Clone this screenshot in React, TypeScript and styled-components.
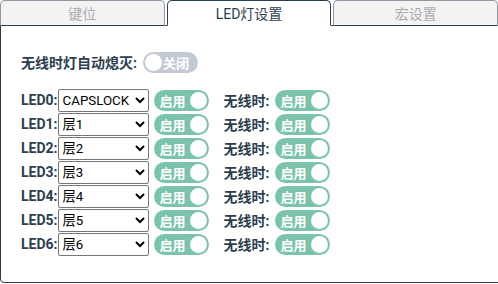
import React from "react";
import styled, { createGlobalStyle } from "styled-components";

const GlobalStyle = createGlobalStyle`
  body {
    margin: 0;
    background: #fff;
    font-family: Roboto, "Noto Sans CJK SC", sans-serif;
    color: #2c3e50;
  }
`;

const Wrapper = styled.div`
  width: 498px;
  height: 284px;
  overflow: hidden;
`;

const TabBar = styled.div`
  display: flex;
  gap: 2px;
  height: 26px;
  position: relative;
  z-index: 1;
  margin-bottom: -1px;
`;

const Tab = styled.div<{ $active?: boolean }>`
  flex: 1;
  display: flex;
  align-items: center;
  justify-content: center;
  box-sizing: border-box;
  border: 1px solid ${(p) => (p.$active ? "#2c3e50" : "#8e99a4")};
  border-bottom: ${(p) => (p.$active ? "1px solid #fff" : "1px solid #2c3e50")};
  border-radius: 5px 5px 0 0;
  background: ${(p) => (p.$active ? "#fff" : "#f3f3f3")};
  color: ${(p) => (p.$active ? "#2c3e50" : "#a9adb2")};
  font-size: 14px;
`;

const Panel = styled.div`
  box-sizing: border-box;
  height: 258px;
  width: 500px;
  border: 1px solid #2c3e50;
  border-radius: 0 0 0 4px;
  padding: 25px 0 0 20px;
`;

const Line = styled.div`
  display: flex;
  align-items: center;
  height: 21px;
  font-size: 14px;
  font-weight: 700;
`;

const Rows = styled.div`
  margin-top: 16px;
  display: flex;
  flex-direction: column;
`;

const Row = styled.div`
  display: flex;
  align-items: center;
  height: 24px;
  font-size: 14px;
  font-weight: 700;
`;

const Label = styled.span<{ $gap?: number; $indent?: number }>`
  margin-left: ${(p) => p.$indent ?? 0}px;
  margin-right: ${(p) => p.$gap ?? 0}px;
  white-space: nowrap;
`;

const Select = styled.select`
  box-sizing: border-box;
  width: 91px;
  height: 23px;
  font-family: Roboto, "Noto Sans CJK SC", sans-serif;
  font-size: 13.3px;
  color: #000;
  background: #fff;
  border: 1px solid #767676;
  border-radius: 2px;
  margin-right: 5px;
`;

const SwitchRoot = styled.span<{ $on: boolean }>`
  position: relative;
  display: inline-flex;
  align-items: center;
  justify-content: ${(p) => (p.$on ? "flex-start" : "flex-end")};
  box-sizing: border-box;
  width: 55px;
  height: 21px;
  border-radius: 11px;
  padding-left: ${(p) => (p.$on ? "6px" : "0")};
  padding-right: ${(p) => (p.$on ? "0" : "9px")};
  background: ${(p) => (p.$on ? "#7bc3ab" : "#c3cad6")};
  color: #fff;
  font-size: 13px;
  font-weight: 700;
  margin-top: 1px;
`;

const Knob = styled.span<{ $on: boolean }>`
  position: absolute;
  top: 2px;
  ${(p) => (p.$on ? "right: 2px;" : "left: 2px;")}
  width: 17px;
  height: 17px;
  border-radius: 50%;
  background: #fff;
`;

const Switch = ({ on }: { on: boolean }) => (
  <SwitchRoot $on={on}>
    {on ? "启用" : "关闭"}
    <Knob $on={on} />
  </SwitchRoot>
);

const options = ["CAPSLOCK", "层1", "层2", "层3", "层4", "层5", "层6"];

const App = () => {
  const [active] = React.useState(1);
  return (
    <Wrapper>
      <GlobalStyle />
      <TabBar>
        {["键位", "LED灯设置", "宏设置"].map((t, i) => (
          <Tab key={t} $active={i === active}>
            {t}
          </Tab>
        ))}
      </TabBar>
      <Panel>
        <Line>
          <Label $gap={6}>无线时灯自动熄灭:</Label>
          <Switch on={false} />
        </Line>
        <Rows>
          {options.map((o, i) => (
            <Row key={i}>
              <Label>LED{i}:</Label>
              <Select defaultValue={o}>
                {options.map((x) => (
                  <option key={x} value={x}>
                    {x}
                  </option>
                ))}
              </Select>
              <Switch on />
              <Label $indent={15} $gap={5}>
                无线时:
              </Label>
              <Switch on />
            </Row>
          ))}
        </Rows>
      </Panel>
    </Wrapper>
  );
};

export default App;
